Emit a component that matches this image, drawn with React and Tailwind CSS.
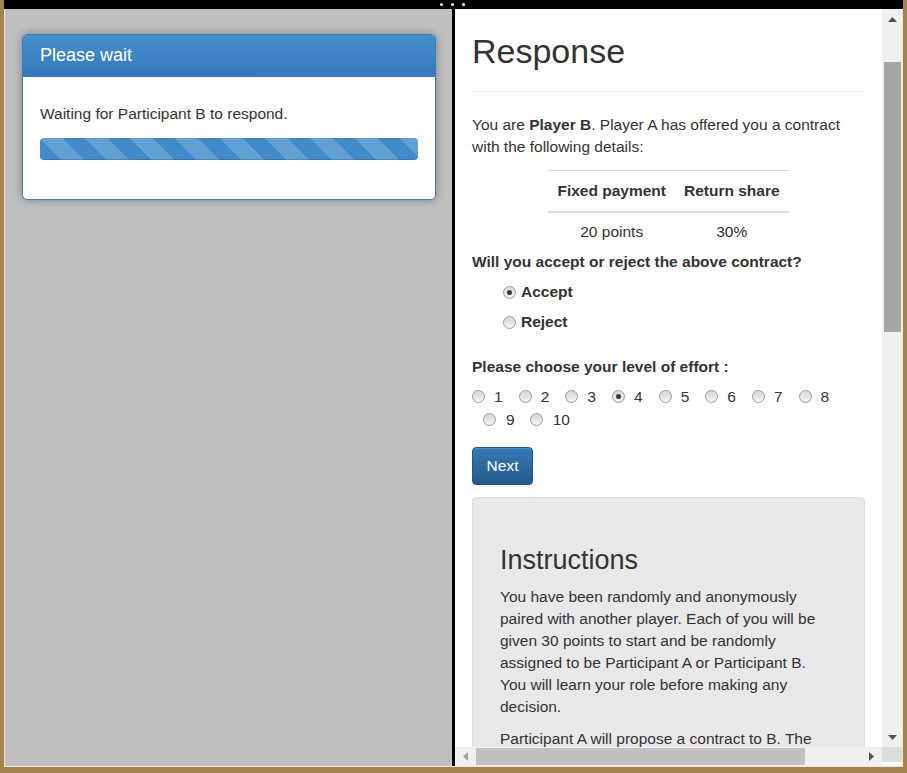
import React from 'react'

const EFFORT_ROW1 = [1, 2, 3, 4, 5, 6, 7, 8]
const EFFORT_ROW2 = [9, 10]

function Radio({ checked }) {
  return (
    <span className="relative flex h-[13px] w-[13px] shrink-0 items-center justify-center rounded-full border border-[#9c9c9c] bg-gradient-to-b from-[#d6d6d6] to-[#f4f4f4]">
      {checked && <span className="h-[5px] w-[5px] rounded-full bg-[#3a3a3a]" />}
    </span>
  )
}

function Arrow({ dir, color = '#505050' }) {
  const pts = {
    up: '0,5 9,5 4.5,0',
    down: '0,0 9,0 4.5,5',
    left: '5,0 5,9 0,4.5',
    right: '0,0 0,9 5,4.5',
  }[dir]
  const vertical = dir === 'up' || dir === 'down'
  return (
    <svg width={vertical ? 9 : 5} height={vertical ? 5 : 9} viewBox={vertical ? '0 0 9 5' : '0 0 5 9'}>
      <polygon points={pts} fill={color} />
    </svg>
  )
}

function WaitCard() {
  return (
    <div className="ml-[17px] mt-[25px] w-[414px] overflow-hidden rounded-[5px] border border-[#3a7dbd] bg-white shadow-[0_0_10px_rgba(0,0,0,0.35)]">
      <div className="flex h-[42px] items-center border-b border-[#3677b6] bg-gradient-to-b from-[#4590cd] to-[#3679ba] pl-[17px] text-[18px] text-white">
        Please wait
      </div>
      <div className="px-[17px] pb-[39px] pt-[26px]">
        <p className="text-[15.5px] leading-[22px]">Waiting for Participant B to respond.</p>
        <div className="mt-[13px] h-[22px] rounded-[4px] bg-[#428bca] bg-[linear-gradient(45deg,rgba(255,255,255,.17)_25%,transparent_25%,transparent_50%,rgba(255,255,255,.17)_50%,rgba(255,255,255,.17)_75%,transparent_75%,transparent)] bg-[length:45px_45px] shadow-[inset_0_-1px_0_rgba(0,0,0,0.15)]" />
      </div>
    </div>
  )
}

function ResponsePane() {
  return (
    <div className="h-full overflow-hidden px-[17px] pt-[23px] text-[15.5px] leading-[22px] text-[#333]">
      <h1 className="border-b border-[#eee] pb-[21px] text-[34px] leading-[38px]">Response</h1>
      <p className="mt-[22px]">
        You are <b>Player B</b>. Player A has offered you a contract with the following details:
      </p>
      <table className="mx-auto mt-[12px] border-t border-[#ddd] text-center">
        <thead>
          <tr className="border-b-2 border-[#ddd]">
            <th className="px-[9px] py-[9px] font-bold">Fixed payment</th>
            <th className="px-[9px] py-[9px] font-bold">Return share</th>
          </tr>
        </thead>
        <tbody>
          <tr>
            <td className="px-[9px] py-[8px]">20 points</td>
            <td className="px-[9px] py-[8px]">30%</td>
          </tr>
        </tbody>
      </table>
      <p className="font-bold">Will you accept or reject the above contract?</p>
      <div className="ml-[31px] mt-[8px] flex items-center gap-[5px] font-bold">
        <Radio checked />
        <span>Accept</span>
      </div>
      <div className="ml-[31px] mt-[8px] flex items-center gap-[5px] font-bold">
        <Radio />
        <span>Reject</span>
      </div>
      <p className="mt-[23px] font-bold">Please choose your level of effort :</p>
      <div className="mt-[7px] flex leading-[23px]">
        {EFFORT_ROW1.map((n) => (
          <div key={n} className="flex w-[46.67px] shrink-0 items-center gap-[9px]">
            <Radio checked={n === 4} />
            <span>{n}</span>
          </div>
        ))}
      </div>
      <div className="flex pl-[11px] leading-[23px]">
        {EFFORT_ROW2.map((n) => (
          <div key={n} className="flex w-[46.67px] shrink-0 items-center gap-[10px]">
            <Radio />
            <span>{n}</span>
          </div>
        ))}
      </div>
      <button className="mt-[16px] h-[38px] w-[61px] rounded-[4px] border border-[#245580] bg-gradient-to-b from-[#337ab7] to-[#265a88] text-white shadow-[inset_0_1px_0_rgba(255,255,255,0.15)]">
        Next
      </button>
      <div className="mt-[12px] rounded-[4px] border border-[#dcdcdc] bg-[#e8e8e8] pb-[20px] pl-[27px] pr-[31px] pt-[47px]">
        <h2 className="text-[27px] leading-[30px]">Instructions</h2>
        <p className="mt-[11px]">
          You have been randomly and anonymously paired with another player. Each of you will be given 30 points to
          start and be randomly assigned to be Participant A or Participant B. You will learn your role before making
          any decision.
        </p>
        <p className="mt-[10px]">
          Participant A will propose a contract to B. The contract specifies a fixed payment and a share of the
          return that B will receive.
        </p>
      </div>
    </div>
  )
}

export default function App() {
  return (
    <div
      className="h-[773px] w-[907px] overflow-hidden bg-[#a6844f] px-[4px] pb-[6px] text-[#333]"
      style={{ fontFamily: '"Liberation Sans", Arial, sans-serif' }}
    >
      <div className="flex h-[9px] items-center gap-[8px] bg-black pl-[436px]">
        <span className="h-[3px] w-[3px] rounded-full bg-white" />
        <span className="h-[3px] w-[3px] rounded-full bg-white" />
        <span className="h-[3px] w-[3px] rounded-full bg-white" />
      </div>
      <div className="flex h-[758px] border-x border-b border-[#efe6cf]">
        <div className="w-[447px] shrink-0 bg-[#c0c0c0]">
          <WaitCard />
        </div>
        <div className="w-[3px] shrink-0 bg-black" />
        <div className="flex w-[447px] shrink-0 flex-col bg-white">
          <div className="flex h-[738px]">
            <div className="w-[427px] shrink-0">
              <ResponsePane />
            </div>
            <div className="flex w-[20px] shrink-0 flex-col bg-[#f0f0f0]">
              <div className="flex h-[20px] items-center justify-center pl-[1px]">
                <Arrow dir="up" />
              </div>
              <div className="ml-[2px] mt-[33px] h-[270px] w-[17px] bg-[#a6a6a6]" />
              <div className="flex-1" />
              <div className="flex h-[20px] items-center justify-center pl-[1px]">
                <Arrow dir="down" />
              </div>
            </div>
          </div>
          <div className="flex h-[19px]">
            <div className="flex w-[427px] shrink-0 items-center bg-[#f0f0f0]">
              <div className="flex w-[21px] justify-center">
                <Arrow dir="left" color="#a3a3a3" />
              </div>
              <div className="h-[17px] w-[329px] bg-[#c1c1c1]" />
              <div className="flex-1" />
              <div className="flex w-[21px] justify-center">
                <Arrow dir="right" />
              </div>
            </div>
            <div className="h-[15px] w-[20px] bg-[#dcdcdc]" />
          </div>
        </div>
      </div>
    </div>
  )
}
